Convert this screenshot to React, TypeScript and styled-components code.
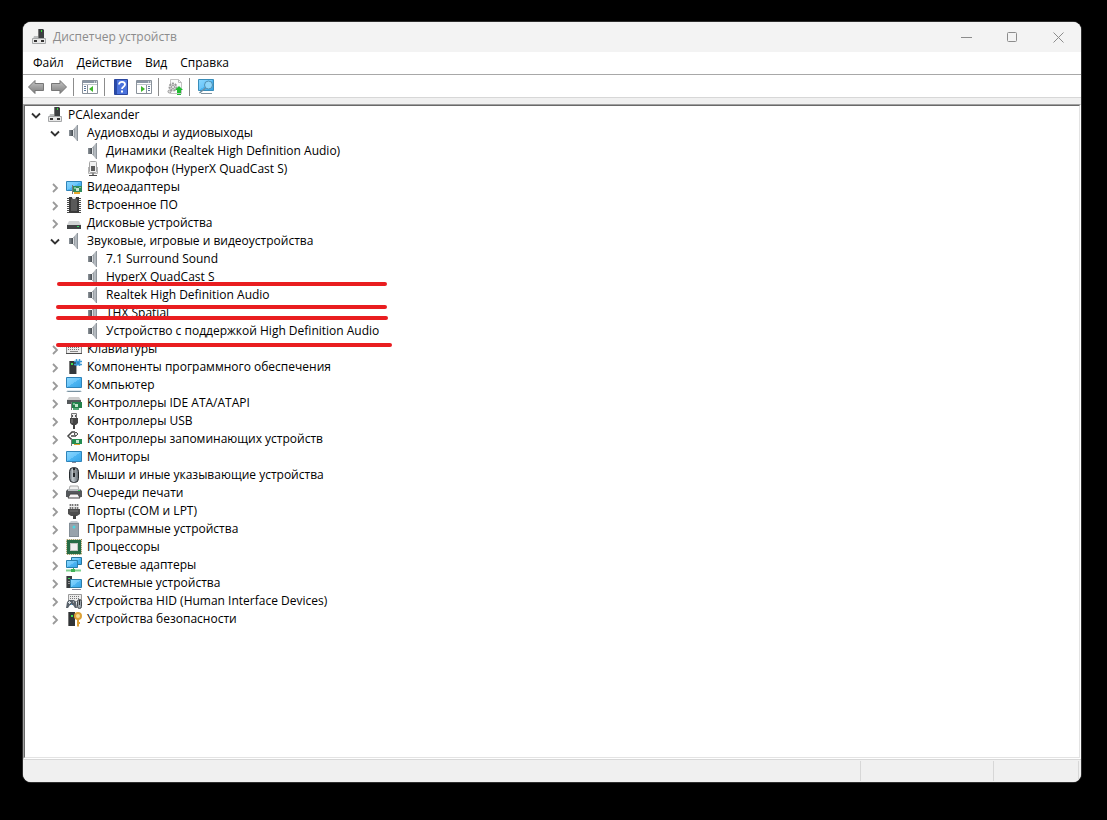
import React, { useState } from "react";
import styled, { createGlobalStyle } from "styled-components";

const GlobalStyle = createGlobalStyle`
  * { box-sizing: border-box; }
  body {
    margin: 0;
    background: #000;
    color: #000;
    font: 12px/18px "Segoe UI", "Open Sans", "Noto Sans", sans-serif;
  }
  button { font: inherit; color: inherit; }
`;

const Desktop = styled.div`
  display: flex;
  min-height: 100vh;
  padding: 22px 26px 38px 23px;
`;

const Window = styled.main`
  display: flex;
  flex: 1;
  flex-direction: column;
  min-width: 0;
  overflow: hidden;
  background: #fff;
  border-radius: 8px;
  box-shadow: 0 0 0 1px #2e2e2e;
`;

const TitleBar = styled.header`
  display: flex;
  align-items: center;
  height: 30px;
  padding-left: 8px;
  background: #f3f3f3;
  color: #8c8c8c;
`;

const Title = styled.h1`
  flex: 1;
  margin: 0 0 0 6px;
  font-size: 12px;
  font-weight: 400;
`;

const CaptionButton = styled.button`
  display: flex;
  align-items: center;
  justify-content: center;
  width: 46px;
  height: 28px;
  padding: 0;
  border: 0;
  background: none;
`;

const MenuBar = styled.nav`
  display: flex;
  gap: 13px;
  height: 23px;
  padding: 2px 10px;
  border-bottom: 1px solid #a8a8a8;
`;

const MenuItem = styled.button`
  padding: 0;
  border: 0;
  background: none;
`;

const Toolbar = styled.div`
  display: flex;
  align-items: center;
  height: 23px;
  padding: 2px 1px 0;
  border-bottom: 1px solid #d7d7d7;
`;

const ToolButton = styled.button`
  display: flex;
  align-items: center;
  justify-content: center;
  width: 23px;
  height: 20px;
  padding: 0;
  border: 0;
  background: none;
`;

const ToolSeparator = styled.span`
  width: 1px;
  height: 18px;
  margin: 0 4px 0 3px;
  background: #8c8c8c;
`;

const Gutter = styled.div`
  height: 6px;
  background: #f0f0f0;
`;

const TreeFrame = styled.section`
  flex: 1;
  border: 1px solid;
  border-color: #a0a0a0 #fff #fff #a0a0a0;
`;

const TreePane = styled.div`
  position: relative;
  height: 100%;
  border: 1px solid;
  border-color: #696969 #e3e3e3 #e3e3e3 #696969;
`;

const Branch = styled.ul<{ $nested?: boolean }>`
  margin: 0;
  padding: 0 0 0 ${(p) => (p.$nested ? 19 : 0)}px;
  list-style: none;
`;

const Row = styled.div`
  display: flex;
  align-items: center;
  height: 18px;
  white-space: nowrap;
`;

const Expander = styled.button`
  display: flex;
  align-items: center;
  justify-content: center;
  width: 22px;
  height: 18px;
  padding: 1px 0 0;
  border: 0;
  background: none;
`;

const ExpanderSpace = styled.span`
  width: 22px;
`;

const Label = styled.span`
  margin-left: 5px;
`;

const Mark = styled.span<{ $top: number; $left: number; $width: number }>`
  position: absolute;
  top: ${(p) => p.$top}px;
  left: ${(p) => p.$left}px;
  width: ${(p) => p.$width}px;
  height: 4px;
  border-radius: 2px;
  background: #e91d20;
`;

const StatusBar = styled.footer`
  display: flex;
  height: 23px;
  padding: 1px 2px 1px 0;
  border-top: 1px solid #d7d7d7;
  background: #f0f0f0;
`;

const StatusCell = styled.span<{ $width?: number }>`
  flex: ${(p) => (p.$width ? `0 0 ${p.$width}px` : "1")};
  border-right: 1px solid #d7d7d7;
`;

const PaintDefs = styled.svg`
  position: absolute;
`;

const Paints = () => (
  <PaintDefs width="0" height="0" aria-hidden="true">
    <defs>
      <linearGradient id="screen" x1="0" y1="0" x2="1" y2="1">
        <stop offset="0" stopColor="#8ad8ff" />
        <stop offset=".5" stopColor="#6cc6fa" />
        <stop offset=".5" stopColor="#4db6f3" />
        <stop offset="1" stopColor="#36a3e6" />
      </linearGradient>
      <linearGradient id="cone">
        <stop offset="0" stopColor="#70777e" />
        <stop offset=".6" stopColor="#c3c8cd" />
        <stop offset="1" stopColor="#7d848b" />
      </linearGradient>
      <linearGradient id="magnet">
        <stop offset="0" stopColor="#8f969c" />
        <stop offset="1" stopColor="#43494f" />
      </linearGradient>
      <linearGradient id="steel" x1="0" y1="0" x2="0" y2="1">
        <stop offset="0" stopColor="#c6c6c6" />
        <stop offset="1" stopColor="#7c7c7c" />
      </linearGradient>
      <linearGradient id="shell">
        <stop offset="0" stopColor="#5c656d" />
        <stop offset=".35" stopColor="#c2c9ce" />
        <stop offset="1" stopColor="#60686f" />
      </linearGradient>
    </defs>
  </PaintDefs>
);

type IconName =
  | "pc" | "speaker" | "mic" | "display" | "firmware" | "disk" | "keyboard"
  | "component" | "computer" | "ide" | "usb" | "storage" | "monitor" | "mouse"
  | "printer" | "port" | "software" | "cpu" | "network" | "system" | "hid" | "security";

const drawings: Record<IconName, React.ReactNode> = {
  pc: (
    <>
      <path d="M7 0h5l1 1v8H7z" fill="#3c3f41" />
      <path d="M7 0h1v9H7z" fill="#777" />
      <path d="M10 1h1v2h-1z" fill="#35dc35" />
      <path d="M3 7h4v2h6l1 1H2z" fill="#b9bbbc" />
      <path d="M1.5 9.5h13v5h-13z" fill="#e8e8e8" stroke="#a5a7a8" />
      <path d="M3 11h3v2H3zM10 11h3v2h-3z" fill="#333" />
    </>
  ),
  speaker: (
    <>
      <path d="M3 5h4v6H3z" fill="url(#magnet)" />
      <path d="M7 5 11 0h1v16h-1l-4-5z" fill="url(#cone)" />
      <path d="M7.5 5v6" stroke="#dfe2e4" />
    </>
  ),
  mic: (
    <>
      <rect x="4.5" y=".5" width="7" height="11" rx="1" fill="#f1f1f1" stroke="#a3a3a3" />
      <path d="M6 5h4v5H6z" fill="#5b5b5b" />
      <path d="M3.5 6v6.5h9V6" fill="none" stroke="#b5b5b5" />
      <path d="M8 12v2" stroke="#888" strokeWidth="2" />
      <path d="M4 14.5h8" stroke="#4b4b4b" />
    </>
  ),
  display: (
    <>
      <path d="M.5 2.5h15v9H.5z" fill="url(#screen)" stroke="#2f83b8" />
      <path d="M6.5 6v9" stroke="#777" />
      <path d="M7 7h9v6H7z" fill="#2f8a5b" />
      <path d="M8 8h2v2H8zM13 8h2v1h-2z" fill="#7fc79c" />
      <path d="M10 9h3v3h-3z" fill="#c3e6cf" />
      <path d="M8 13h6v2H8z" fill="#e8a82f" />
    </>
  ),
  firmware: (
    <>
      <path d="M2.5 1v15M13.5 1v15" stroke="#4d4d4d" strokeWidth="3" strokeDasharray="1 1" />
      <path d="M3 0h10v16H3z" fill="#3b3b3b" />
      <path d="M5 2h6v12H5z" fill="#595959" />
      <path d="M6 0h4v1L9 2H7L6 1z" fill="#e2e2e2" />
    </>
  ),
  disk: (
    <>
      <path d="m3 6-2 4h14l-2-4z" fill="#d2d4d5" />
      <path d="M1 10h14v4H1z" fill="#424446" />
      <path d="M11 11h2v1h-2z" fill="#37df68" />
    </>
  ),
  keyboard: (
    <>
      <path d="M.5 4.5h15v8H.5z" fill="#ececec" stroke="#8a8a8a" />
      <path d="M2 6.5h12M2 8.5h12" stroke="#757575" strokeDasharray="1 1" />
      <path d="M0 12.5h16" stroke="#4d4d4d" />
      <path d="M4 10.5h8" stroke="#888" />
    </>
  ),
  component: (
    <>
      <path d="M3 2h7v13H3z" fill="#34383b" />
      <path d="M3 2h1v13H3z" fill="#777" />
      <path d="M5 4h2v2H5z" fill="#3ddd4a" />
      <path d="M10 7h1v8h-1z" fill="#a7a7a7" />
      <path d="M10.5 0v7M13.5 0v7M8 2.5h8M8 5.5h8" stroke="#3d9ad6" strokeWidth="1.5" />
      <path d="M11 3h2v2h-2z" fill="#2d86c4" />
    </>
  ),
  computer: (
    <>
      <path d="M.5.5h15v10H.5z" fill="url(#screen)" stroke="#2e83b9" />
      <path d="M2 14h12l2 1H0z" fill="#77909f" />
      <path d="M1 13.5h14" stroke="#dce8ef" />
    </>
  ),
  ide: (
    <>
      <path d="M3 2h10l2 3H1z" fill="#ccc" />
      <path d="M1 5h14v4H1z" fill="#55595b" />
      <path d="M5.5 7v8" stroke="#777" />
      <path d="M6 7h10v6H6z" fill="#23804a" />
      <path d="M7 8h2v2H7z" fill="#74bd90" />
      <path d="M9 9h3v3H9z" fill="#c5e5cd" />
      <path d="M7 13h6v2H7z" fill="#56a876" />
    </>
  ),
  usb: (
    <>
      <path d="M5.5.5h5v5h-5z" fill="#eee" stroke="#777" />
      <path d="M6 2h1v2H6zM9 2h1v2H9z" fill="#555" />
      <path d="M4 5h8v5l-2 2H6l-2-2z" fill="#454545" />
      <path d="M5 6h2v4H5z" fill="#686868" />
      <path d="M8 11v5" stroke="#414141" strokeWidth="2" />
    </>
  ),
  storage: (
    <>
      <path d="M9 1H6L2 5l4 4h2M5 5h5" stroke="#454545" strokeWidth="1.5" fill="none" />
      <path d="m8 3 2-2 2 2-2 2z" fill="#ddd" stroke="#555" />
      <path d="M5.5 7v8" stroke="#777" />
      <path d="M6 8h10v5H6z" fill="#248d51" />
      <path d="M10 9h3v3h-3z" fill="#c5e7d1" />
      <path d="M8 13h6v1H8z" fill="#e1a12e" />
    </>
  ),
  monitor: (
    <>
      <path d="M.5 2.5h15v10H.5z" fill="url(#screen)" stroke="#2e83b9" />
      <path d="M6 13.5h4" stroke="#889" />
    </>
  ),
  mouse: (
    <>
      <rect x="3.5" y=".5" width="9" height="15" rx="4" fill="url(#shell)" stroke="#262b2f" />
      <path d="M8 1v9" stroke="#23272b" strokeWidth="2" />
      <path d="M8 3v3" stroke="#d8dadb" />
    </>
  ),
  printer: (
    <>
      <path d="M4 1h8l1 4H3z" fill="#f0f0f0" stroke="#aaa" />
      <path d="M2 4h12l2 2v6H0V6z" fill="#54585b" />
      <path d="M2 5h12" stroke="#b9bdc0" strokeWidth="2" />
      <path d="M12 5h2v1h-2z" fill="#38d75b" />
      <path d="M4 9h8l2 4H2z" fill="#f6f6f6" stroke="#444" />
    </>
  ),
  port: (
    <>
      <path d="M3 1h10v5H3z" fill="#c8c8c8" />
      <path d="M4.5 1v5M6.5 1v5M9.5 1v5M11.5 1v5" stroke="#777" />
      <path d="M3 3h10v1H3z" fill="#eee" />
      <path d="M2 6h12v5l-3 2H5l-3-2z" fill="#4e4e4e" />
      <path d="M4 8h8" stroke="#777" />
      <path d="M7 12h3v4H7z" fill="#444" />
    </>
  ),
  software: (
    <>
      <path d="m3 2 2-2h6l2 2z" fill="#c5cbd0" />
      <path d="M3 2h10v14H3z" fill="#828d96" />
      <path d="M4 3h8v12H4z" fill="#98a3ab" />
      <circle cx="8" cy="6" r="1.5" fill="#4ad5e1" />
    </>
  ),
  cpu: (
    <>
      <rect x=".75" y=".75" width="14.5" height="14.5" fill="none" stroke="#8d8440" strokeWidth="1.5" strokeDasharray="1 1" />
      <path d="M1 1h14v14H1z" fill="#256b45" />
      <path d="M4 4h8v8H4z" fill="#bfc4c0" />
      <path d="M5 5h6v6H5z" fill="#efefef" />
    </>
  ),
  network: (
    <>
      <path d="M5.5.5h10v7h-10z" fill="url(#screen)" stroke="#27769f" />
      <path d="M.5 3.5h11v7H.5z" fill="url(#screen)" stroke="#2781af" />
      <path d="M0 13.5h15" stroke="#7fd08f" strokeWidth="2" />
      <path d="M5 12h4v3H5zM7 11h1v1H7z" fill="#3fb257" />
    </>
  ),
  system: (
    <>
      <path d="M0 1h6v12H0z" fill="#383c3f" />
      <path d="M0 1h1v12H0z" fill="#888" />
      <path d="M2 3h2v1H2z" fill="#42da59" />
      <path d="M2 6.5h3M2 8.5h3" stroke="#929292" />
      <path d="M4.5 4.5h11v8h-11z" fill="url(#screen)" stroke="#2b7daa" />
      <path d="M6 14.5h9" stroke="#889" />
    </>
  ),
  hid: (
    <>
      <path d="M2.5 1.5h13v7h-13z" fill="#ececec" stroke="#999" />
      <path d="M4 3.5h10M4 5.5h10" stroke="#777" strokeDasharray="1 1" />
      <path d="m0 15 1-6 2-2h5l2 2 1 6H9l-2-3H4l-2 3z" fill="#59626b" />
      <path d="M2 9.5h3M3.5 8v3M7 9h1" stroke="#d5dce1" />
      <path d="M5 11h1v1H5z" fill="#58aee5" />
      <rect x="11.5" y="6.5" width="4" height="9" rx="2" fill="#9ca4aa" stroke="#454b50" />
      <path d="M13.5 7v5" stroke="#333" />
    </>
  ),
  security: (
    <>
      <path d="M2 1h7v14H2z" fill="#303437" />
      <path d="M2 1h1v14H2z" fill="#777" />
      <path d="M5 4h2v2H5z" fill="#3fdd50" />
      <circle cx="12" cy="5" r="3" fill="#f7dc94" stroke="#dda238" strokeWidth="2" />
      <path d="M11 8h2v7l-1 1-1-1zM13 11h1v2h-1z" fill="#dda238" />
    </>
  ),
};

const Icon = ({ name }: { name: IconName }) => (
  <svg width="16" height="16" viewBox="0 0 16 16" aria-hidden="true">{drawings[name]}</svg>
);

interface Device {
  label: string;
  icon: IconName;
  open?: boolean;
  children?: Device[];
}

const group = (label: string, icon: IconName): Device => ({ label, icon, children: [] });
const audio = (label: string): Device => ({ label, icon: "speaker" });

const root: Device = {
  label: "PCAlexander",
  icon: "pc",
  open: true,
  children: [
    {
      label: "Аудиовходы и аудиовыходы",
      icon: "speaker",
      open: true,
      children: [
        audio("Динамики (Realtek High Definition Audio)"),
        { label: "Микрофон (HyperX QuadCast S)", icon: "mic" },
      ],
    },
    group("Видеоадаптеры", "display"),
    group("Встроенное ПО", "firmware"),
    group("Дисковые устройства", "disk"),
    {
      label: "Звуковые, игровые и видеоустройства",
      icon: "speaker",
      open: true,
      children: [
        audio("7.1 Surround Sound"),
        audio("HyperX QuadCast S"),
        audio("Realtek High Definition Audio"),
        audio("THX Spatial"),
        audio("Устройство с поддержкой High Definition Audio"),
      ],
    },
    group("Клавиатуры", "keyboard"),
    group("Компоненты программного обеспечения", "component"),
    group("Компьютер", "computer"),
    group("Контроллеры IDE ATA/ATAPI", "ide"),
    group("Контроллеры USB", "usb"),
    group("Контроллеры запоминающих устройств", "storage"),
    group("Мониторы", "monitor"),
    group("Мыши и иные указывающие устройства", "mouse"),
    group("Очереди печати", "printer"),
    group("Порты (COM и LPT)", "port"),
    group("Программные устройства", "software"),
    group("Процессоры", "cpu"),
    group("Сетевые адаптеры", "network"),
    group("Системные устройства", "system"),
    group("Устройства HID (Human Interface Devices)", "hid"),
    group("Устройства безопасности", "security"),
  ],
};

const TreeNode = ({ device }: { device: Device }) => {
  const [open, setOpen] = useState(!!device.open);
  return (
    <li>
      <Row>
        {device.children ? (
          <Expander aria-label={device.label} aria-expanded={open} onClick={() => setOpen(!open)}>
            <svg width="10" height="10" viewBox="0 0 10 10" fill="none">
              {open
                ? <path d="m1 2.5 4 4 4-4" stroke="#333" strokeWidth="1.8" />
                : <path d="m3 1 4 4-4 4" stroke="#9a9a9a" strokeWidth="1.8" />}
            </svg>
          </Expander>
        ) : (
          <ExpanderSpace />
        )}
        <Icon name={device.icon} />
        <Label>{device.label}</Label>
      </Row>
      {open && device.children && (
        <Branch $nested>
          {device.children.map((child) => <TreeNode key={child.label} device={child} />)}
        </Branch>
      )}
    </li>
  );
};

const Arrow = ({ forward }: { forward?: boolean }) => (
  <svg width="16" height="16" viewBox="0 0 16 16">
    <path
      d={forward ? "M15.5 8 9 1.5v3H.5v7H9v3z" : "M.5 8 7 1.5v3h8.5v7H7v3z"}
      fill="url(#steel)"
      stroke="#777"
    />
  </svg>
);

const PaneIcon = ({ right }: { right?: boolean }) => (
  <svg width="16" height="16" viewBox="0 0 16 16">
    <path d="M.5 1.5h15v13H.5z" fill="#fff" stroke="#8a929b" />
    <path d="M1 3h14" stroke="#8a96a4" strokeWidth="2" />
    <path d="M12 3h1M14 3h1" stroke="#fff" />
    <path d="M1 5.5h14" stroke="#bcc3ca" />
    <path d={right ? "M10.5 6v8" : "M5.5 6v8"} stroke="#8a929b" />
    <path d={right ? "M12 7.5h2M12 9.5h2M12 11.5h2" : "M2 7.5h2M2 9.5h2M2 11.5h2"} stroke="#5c7799" />
    <path d={right ? "M5 7v6l4-3z" : "M11 7v6l-4-3z"} fill="#3eb62c" />
  </svg>
);

const HelpIcon = () => (
  <svg width="14" height="16" viewBox="0 0 14 16">
    <path d="M.5.5h13v15H.5z" fill="#4a72dc" stroke="#2b479f" />
    <path d="M1 1h2v14H1z" fill="#2a4ba8" />
    <path d="M5 5.5C5 2 11 2 11 5.5 11 8 8 7.5 8 10" fill="none" stroke="#fff" strokeWidth="1.8" />
    <path d="M7 11.5h2v2H7z" fill="#fff" />
  </svg>
);

const UpdateIcon = () => (
  <svg width="16" height="16" viewBox="0 0 16 16">
    <path d="M3.5.5h8l3 3v11h-11z" fill="#fafafa" stroke="#c3c3c3" />
    <path d="M11.5.5v3h3" fill="none" stroke="#bbb" />
    <circle cx="6" cy="8" r="3.5" fill="#ddd" stroke="#999" strokeWidth="2" strokeDasharray="2 1" />
    <circle cx="6" cy="8" r="1.5" fill="#fff" stroke="#999" />
    <circle cx="2.5" cy="12.5" r="1.5" fill="#ddd" stroke="#999" />
    <path d="m12 7 4 4h-2v3h-4v-3H8z" fill="#21bd32" />
    <path d="M10 15.5h4" stroke="#21bd32" />
  </svg>
);

const ScanIcon = () => (
  <svg width="18" height="16" viewBox="0 0 18 16">
    <path d="M1.5.5h15v11h-15z" fill="url(#screen)" stroke="#398db9" />
    <path d="M4 14.5h11" stroke="#7f93a0" />
    <circle cx="11.5" cy="6" r="4" fill="#8fd6fa" stroke="#4f8fb3" />
    <path d="m8.5 9-6 5" stroke="#6f8d9f" strokeWidth="1.5" />
  </svg>
);

export default function App() {
  return (
    <Desktop>
      <GlobalStyle />
      <Paints />
      <Window>
        <TitleBar>
          <Icon name="pc" />
          <Title>Диспетчер устройств</Title>
          <CaptionButton aria-label="Свернуть">
            <svg width="11" height="11"><path d="M0 5.5h11" stroke="#8c8c8c" /></svg>
          </CaptionButton>
          <CaptionButton aria-label="Развернуть">
            <svg width="11" height="11"><rect x=".5" y=".5" width="9" height="9" rx="1" fill="none" stroke="#8c8c8c" /></svg>
          </CaptionButton>
          <CaptionButton aria-label="Закрыть">
            <svg width="11" height="11"><path d="m.5.5 10 10m0-10-10 10" stroke="#8c8c8c" /></svg>
          </CaptionButton>
        </TitleBar>
        <MenuBar>
          {["Файл", "Действие", "Вид", "Справка"].map((item) => <MenuItem key={item}>{item}</MenuItem>)}
        </MenuBar>
        <Toolbar role="toolbar">
          <ToolButton aria-label="Назад"><Arrow /></ToolButton>
          <ToolButton aria-label="Вперед"><Arrow forward /></ToolButton>
          <ToolSeparator />
          <ToolButton aria-label="Дерево консоли"><PaneIcon /></ToolButton>
          <ToolSeparator />
          <ToolButton aria-label="Справка"><HelpIcon /></ToolButton>
          <ToolButton aria-label="Панель действий"><PaneIcon right /></ToolButton>
          <ToolSeparator />
          <ToolButton aria-label="Обновить драйвер"><UpdateIcon /></ToolButton>
          <ToolSeparator />
          <ToolButton aria-label="Обновить конфигурацию оборудования"><ScanIcon /></ToolButton>
        </Toolbar>
        <Gutter />
        <TreeFrame>
          <TreePane>
            <Branch>
              <TreeNode device={root} />
            </Branch>
            <Mark $top={176} $left={32} $width={330} />
            <Mark $top={199} $left={31} $width={331} />
            <Mark $top={210} $left={31} $width={332} />
            <Mark $top={237} $left={31} $width={336} />
          </TreePane>
        </TreeFrame>
        <StatusBar>
          <StatusCell />
          <StatusCell $width={133} />
          <StatusCell $width={85} />
        </StatusBar>
      </Window>
    </Desktop>
  );
}
